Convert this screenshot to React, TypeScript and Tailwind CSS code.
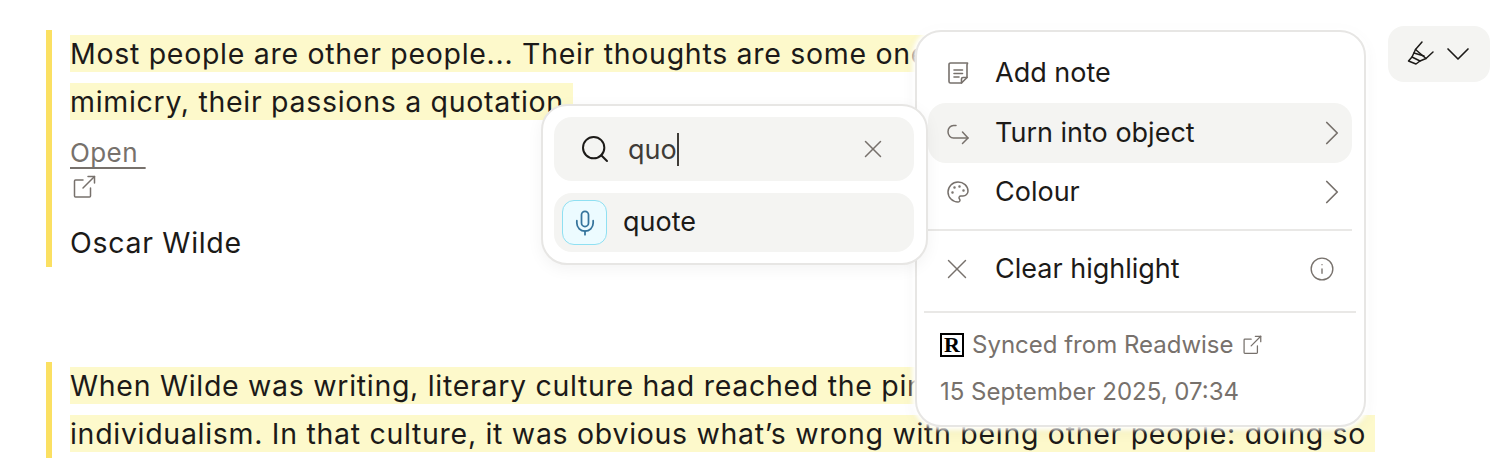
import { ChevronDown, ChevronRight, Info, Mic, Palette, Search, X } from "lucide-react";

function ExternalIcon({ className }: { className?: string }) {
  return (
    <svg viewBox="0 0 24 24" fill="none" stroke="currentColor" strokeWidth="1.5" strokeLinecap="round" strokeLinejoin="round" className={className}>
      <path d="M11 5H3.500a1 1 0 0 0-1 1v15a1 1 0 0 0 1 1h14a1 1 0 0 0 1-1v-8" />
      <path d="M11 13 22.500 1.500" />
      <path d="M16 1.500h6.500v6.500" />
    </svg>
  );
}

function NoteIcon() {
  return (
    <svg viewBox="0 0 24 24" fill="none" stroke="#77716c" strokeWidth="1.600" strokeLinejoin="round" strokeLinecap="round" className="h-6 w-6">
      <path d="M15.500 22H4.500a1.500 1.500 0 0 1-1.500-1.500v-17A1.500 1.500 0 0 1 4.500 2h17A1.500 1.500 0 0 1 21 3.500V16.500z" />
      <path d="M15.500 22v-4a1.500 1.500 0 0 1 1.500-1.500h4" />
      <path d="M8 9h8.500M8 12.500h8.500M8 16h5" />
    </svg>
  );
}

function TurnIcon() {
  return (
    <svg viewBox="0 0 24 24" fill="none" stroke="#77716c" strokeWidth="1.500" strokeLinecap="round" strokeLinejoin="round" className="h-6 w-6">
      <path d="M10 4.500H7.500a5.500 6.250 0 0 0 0 12.500H22" />
      <path d="M16.500 11l5.500 6-5.500 5.500" />
    </svg>
  );
}

function HighlighterIcon() {
  return (
    <svg viewBox="0 0 28 28" fill="none" stroke="#1c1a18" strokeWidth="1.500" strokeLinecap="round" strokeLinejoin="round" className="h-7 w-7">
      <path d="M15 2 8.500 9.500 19 18.500 26 12" />
      <path d="M8.500 9.500 5 17l8 4 6-2.500" />
      <path d="M7 13l10 3" />
      <path d="M5 17l-3.500 4 7.500 3 4-3" />
    </svg>
  );
}

function MenuRow({ icon, label, active, chevron, info }: { icon: React.ReactNode; label: string; active?: boolean; chevron?: boolean; info?: boolean }) {
  return (
    <div className={`flex h-[60px] items-center rounded-[18px] pl-[18px] pr-[10px] ${active ? "bg-[#f4f4f2]" : ""}`}>
      <div className="flex w-[49px] shrink-0 items-center">{icon}</div>
      <span className="flex-1 text-[#1c1a18]">{label}</span>
      {chevron && <ChevronRight className="-mr-[11px] h-[42px] w-[42px] text-[#77716c]" strokeWidth={1} />}
      {info && <Info className="mr-[7px] h-[26px] w-[26px] text-[#77716c]" strokeWidth={1.25} />}
    </div>
  );
}

function Mark({ children }: { children: React.ReactNode }) {
  return <span className="bg-[#fdf9cb] py-px">{children}</span>;
}

export default function App() {
  return (
    <div className="relative flex h-[458px] w-[1504px] overflow-hidden bg-white pl-[46px] pr-[14px] pt-[30px] font-['Inter',sans-serif] text-[28px] leading-[48px] text-[#1c1a18]">
      <div className="w-[1328px] shrink-0 text-[28.5px] tracking-[0.7px]">
        <div className="border-l-[6px] border-[#fbe062] pl-[18px]">
          <div className="whitespace-nowrap">
            <Mark>Most people are other people... Their thoughts are some one else's opinions, their lives a</Mark>
          </div>
          <div>
            <Mark>mimicry, their passions a quotation. </Mark>
          </div>
          <div className="mt-[8px] text-[26px] tracking-[0.4px] text-[#77716c]">
            <div className="h-[38px] leading-[38px]">
              <span className="whitespace-pre underline decoration-2 underline-offset-[5px]">Open </span>
            </div>
            <ExternalIcon className="mb-[20px] ml-[2px] mt-[3px] h-[24px] w-[24px]" />
          </div>
          <div className="-mb-px">Oscar Wilde</div>
        </div>
        <div className="mt-[96px] border-l-[6px] border-[#fbe062] pl-[18px]">
          <div className="whitespace-nowrap">
            <Mark>When Wilde was writing, literary culture had reached the pinnacle of a certain kind of</Mark>
          </div>
          <div className="whitespace-pre">
            <Mark>individualism. In that culture, it was obvious what’s wrong with being other people: doing so </Mark>
          </div>
        </div>
      </div>

      <div className="ml-[14px] flex h-[56px] w-[102px] shrink-0 -translate-y-[4px] items-center gap-[3px] rounded-[16px] bg-[#f4f4f2] pl-[19px]">
        <HighlighterIcon />
        <ChevronDown className="h-[40px] w-[40px] text-[#1c1a18]" strokeWidth={1} />
      </div>

      {/* highlight menu */}
      <div className="absolute left-[915px] top-[30px] flex h-[397px] w-[451px] flex-col rounded-[26px] border-2 border-[#e7e6e4] bg-white pl-[11px] pr-[12px] pt-[11px] text-[27px] shadow-[0_0_4px_3px_rgba(255,255,255,0.95),0_4px_16px_rgba(0,0,0,0.05)]">
        <MenuRow icon={<NoteIcon />} label="Add note" />
        <MenuRow icon={<TurnIcon />} label="Turn into object" active chevron />
        <div className="-mt-px">
          <MenuRow icon={<Palette className="h-6 w-6 text-[#77716c]" strokeWidth={1.5} />} label="Colour" chevron />
        </div>
        <div className="mt-[7px] h-[2px] bg-[#e9e8e6]" />
        <div className="mt-[8px]">
          <MenuRow icon={<X className="-my-[4px] -ml-[6px] h-[34px] w-[34px] text-[#77716c]" strokeWidth={1} />} label="Clear highlight" info />
        </div>
        <div className="-mx-[4px] mt-[12px] h-[2px] bg-[#e9e8e6]" />
        <div className="mt-[8px] pl-[12px] text-[24px] leading-[47px] text-[#77716c]">
          <div className="flex items-center">
            <span className="mr-[8px] flex h-6 w-6 items-center justify-center border-2 border-black font-['Liberation_Serif',serif] text-[22px] font-bold leading-none text-black">R</span>
            <span>Synced from Readwise</span>
            <ExternalIcon className="ml-[8px] h-[20px] w-[20px]" />
          </div>
          <div>15 September 2025, 07:34</div>
        </div>
      </div>

      {/* object search popup */}
      <div className="absolute left-[541px] top-[104px] w-[387px] rounded-[26px] border-2 border-[#e7e6e4] bg-white py-[11px] pl-[11px] pr-[12px] text-[27px] shadow-[0_4px_16px_rgba(0,0,0,0.05)]">
        <div className="flex h-[64px] items-center rounded-[18px] bg-[#f4f4f2] pl-[25px] pr-[26px]">
          <Search className="h-[32px] w-[32px] shrink-0 text-[#1c1a18]" strokeWidth={1.5} />
          <span className="ml-[17px] pt-[2px] text-[#3f3c38]">quo</span>
          <span className="h-[33px] w-[2px] bg-[#3f3c38]" />
          <X className="ml-auto h-[30px] w-[30px] text-[#77716c]" strokeWidth={1.2} />
        </div>
        <div className="mt-[12px] flex h-[59px] items-center rounded-[18px] bg-[#f4f4f2] pl-[8px]">
          <div className="flex h-[45px] w-[45px] items-center justify-center rounded-[12px] border border-[#8fe0f2] bg-[#ecfbff]">
            <Mic className="h-[28px] w-[28px] text-[#35749c]" strokeWidth={1.5} />
          </div>
          <span className="ml-[16px] pb-[2px]">quote</span>
        </div>
      </div>
    </div>
  );
}
